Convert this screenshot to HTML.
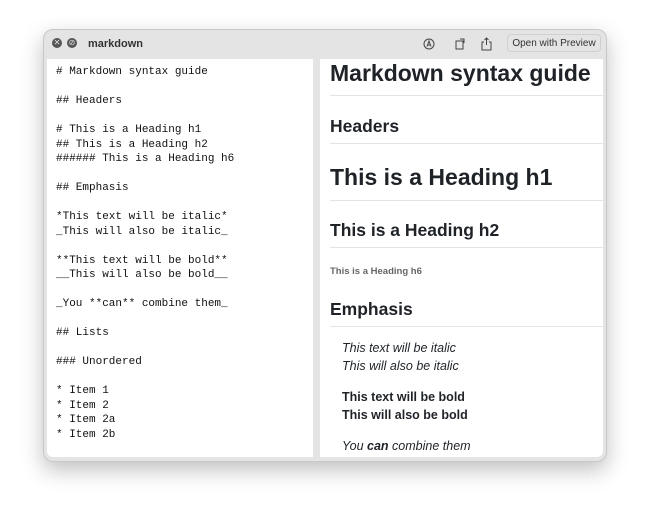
<!DOCTYPE html>
<html><head><style>
body{margin:0;width:650px;height:517px;background:#fff;position:relative;overflow:hidden;font-family:"Liberation Sans",sans-serif}
.win{position:absolute;left:43px;top:29px;width:564px;height:433px;background:#e4e4e4;border-radius:10px;box-shadow:0 8px 22px rgba(0,0,0,.25);border:1px solid #c8c8c8;box-sizing:border-box}
.title{position:absolute;left:88px;top:38px;font-size:11px;font-weight:bold;color:#333}
.btn{position:absolute;left:507px;top:34px;width:94px;height:18px;border:1px solid #d0d0d0;border-radius:4px;font-size:10px;color:#333;text-align:center;line-height:18px;box-sizing:border-box}
.dot{position:absolute;top:38px;width:10px;height:10px;border-radius:50%;background:#555;color:#e4e4e4;font-size:8px;line-height:10px;text-align:center}
.left{position:absolute;left:47px;top:59px;width:266px;height:398px;background:#fff;border-radius:0 0 0 6px}
.right{position:absolute;left:320px;top:59px;width:283px;height:398px;background:#fff;overflow:hidden;border-radius:0 0 6px 0}
pre{margin:0;position:absolute;left:9px;top:6px;font-family:"Liberation Mono",monospace;font-size:11px;line-height:14.5px;color:#111}
.r{position:absolute;left:10px;white-space:nowrap;color:#1f2328;font-weight:bold}
.hr{position:absolute;left:10px;width:273px;height:1px;background:#e4e4e4}
.t{position:absolute;left:22px;font-size:12.5px;color:#1f2328;white-space:nowrap}
</style></head><body>
<div class="win"></div>
<div class="dot" style="left:52px">✕</div>
<div class="dot" style="left:67px">⊘</div>
<div class="title">markdown</div>
<svg style="position:absolute;left:422px;top:37px" width="86" height="14" fill="none" stroke="#444" stroke-width="1">
<circle cx="7" cy="7" r="5"/><path d="M5 9.5 L7 4 L9 9.5 M5.7 8 H8.3"/>
<rect x="34" y="4" width="7" height="8"/><path d="M38 2 h4 v4"/>
<path d="M62 5 h-2 v8 h9 v-8 h-2 M64.5 1 v7 M62.5 3 L64.5 1 L66.5 3"/>
</svg>
<div class="btn">Open with Preview</div>
<div class="left"><pre># Markdown syntax guide

## Headers

# This is a Heading h1
## This is a Heading h2
###### This is a Heading h6

## Emphasis

*This text will be italic*
_This will also be italic_

**This text will be bold**
__This will also be bold__

_You **can** combine them_

## Lists

### Unordered

* Item 1
* Item 2
* Item 2a
* Item 2b</pre></div>
<div class="right">
<div class="r" style="top:1px;font-size:23px">Markdown syntax guide</div>
<div class="hr" style="top:36px"></div>
<div class="r" style="top:57px;font-size:17.5px">Headers</div>
<div class="hr" style="top:84px"></div>
<div class="r" style="top:105px;font-size:23px">This is a Heading h1</div>
<div class="hr" style="top:141px"></div>
<div class="r" style="top:161px;font-size:17.5px">This is a Heading h2</div>
<div class="hr" style="top:188px"></div>
<div class="r" style="top:207px;font-size:9.5px;color:#666">This is a Heading h6</div>
<div class="r" style="top:240px;font-size:17.5px">Emphasis</div>
<div class="hr" style="top:267px"></div>
<div class="t" style="top:282px;font-style:italic">This text will be italic</div>
<div class="t" style="top:300px;font-style:italic">This will also be italic</div>
<div class="t" style="top:331px;font-weight:bold">This text will be bold</div>
<div class="t" style="top:349px;font-weight:bold">This will also be bold</div>
<div class="t" style="top:380px;font-style:italic">You <b>can</b> combine them</div>
</div>
</body></html>
